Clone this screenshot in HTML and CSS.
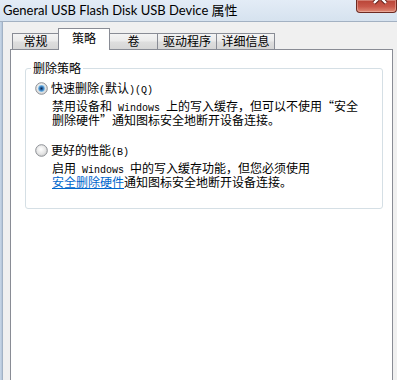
FILE: index.html
```html
<!DOCTYPE html>
<html lang="zh-CN">
<head>
<meta charset="utf-8">
<title>General USB Flash Disk USB Device 属性</title>
<link rel="stylesheet" href="styles.css">
</head>
<body>
<div class="window">
  <div class="titlebar">
    <span class="title">General USB Flash Disk USB Device 属性</span>
    <span class="close">
      <svg width="41" height="13" viewBox="0 0 41 13">
        <path d="M18 -9 L30 3 M30 -9 L18 3" stroke="#5a1a14" stroke-width="4.2" fill="none"/>
        <path d="M18 -9 L30 3 M30 -9 L18 3" stroke="#ffffff" stroke-width="2.4" fill="none"/>
      </svg>
    </span>
  </div>
  <div class="frame">
    <div class="edge"></div>
    <div class="client">
      <div class="tabs">
        <div class="tab t1">常规</div>
        <div class="tab active">策略</div>
        <div class="tab t3">卷</div>
        <div class="tab t4">驱动程序</div>
        <div class="tab t5">详细信息</div>
      </div>
      <div class="panel">
        <fieldset class="group">
          <legend>删除策略</legend>
          <label class="option">
            <span class="radio">
              <svg width="13" height="13" viewBox="0 0 13 13">
                <defs>
                  <radialGradient id="rbg1" cx="45%" cy="40%" r="65%">
                    <stop offset="0" stop-color="#ffffff"/>
                    <stop offset="1" stop-color="#d2d2d2"/>
                  </radialGradient>
                  <radialGradient id="dot1" cx="50%" cy="50%" r="50%">
                    <stop offset="0" stop-color="#0f2748"/>
                    <stop offset="0.45" stop-color="#2a69ad"/>
                    <stop offset="1" stop-color="#86c6ee"/>
                  </radialGradient>
                </defs>
                <circle cx="6.5" cy="6.5" r="5.8" fill="url(#rbg1)" stroke="#8c8f94" stroke-width="1"/>
                <circle cx="6.5" cy="6.5" r="3.4" fill="url(#dot1)"/>
              </svg>
            </span>
            <span class="label">快速删除<span class="a">(</span>默认<span class="a">)(Q)</span></span>
          </label>
          <p class="desc">禁用设备和<span class="a"> Windows </span>上的写入缓存，但可以不使用“安全<br>删除硬件”通知图标安全地断开设备连接。</p>
          <label class="option second">
            <span class="radio">
              <svg width="13" height="13" viewBox="0 0 13 13">
                <defs>
                  <radialGradient id="rbg2" cx="45%" cy="40%" r="65%">
                    <stop offset="0" stop-color="#ffffff"/>
                    <stop offset="0.6" stop-color="#e6e6e6"/>
                    <stop offset="1" stop-color="#c8c8c8"/>
                  </radialGradient>
                </defs>
                <circle cx="6.5" cy="6.5" r="5.8" fill="url(#rbg2)" stroke="#8c8f94" stroke-width="1"/>
              </svg>
            </span>
            <span class="label">更好的性能<span class="a">(B)</span></span>
          </label>
          <p class="desc">启用<span class="a"> Windows </span>中的写入缓存功能，但您必须使用<br><a class="link" href="#">安全删除硬件</a>通知图标安全地断开设备连接。</p>
        </fieldset>
      </div>
    </div>
  </div>
</div>
</body>
</html>
```
FILE: styles.css
```css
* { box-sizing: border-box; }
html, body { margin: 0; padding: 0; }
body {
  width: 397px;
  height: 380px;
  overflow: hidden;
  background: #f0f0f0;
  color: #000;
  font-family: "Noto Sans CJK SC", sans-serif;
  font-size: 12px;
}
.window {
  display: flex;
  flex-direction: column;
  height: 380px;
}
.titlebar {
  flex: none;
  height: 22px;
  display: flex;
  justify-content: space-between;
  align-items: flex-start;
  background: linear-gradient(#e3ecf6, #d6e2ef);
  border-bottom: 1px solid #a3b1c2;
}
.title {
  font-family: "Lato", "Noto Sans CJK SC", sans-serif;
  font-size: 13px;
  line-height: 20px;
  padding-left: 3px;
  white-space: nowrap;
}
.close {
  width: 41px;
  height: 13px;
  display: block;
  background: linear-gradient(#b84336, #c9584a 55%, #de8b77);
  border: 1px solid #6d2a22;
  border-top: 0;
  border-radius: 0 0 4px 4px;
  box-shadow: inset 0 0 0 1px rgba(255, 230, 220, 0.35);
  overflow: hidden;
}
.close svg { display: block; margin: 0 0 0 -1px; }
.frame {
  flex: 1;
  display: flex;
  min-height: 0;
}
.edge {
  width: 3px;
  flex: none;
  background: linear-gradient(90deg, #c9d8e9, #b3c4d8);
  border-right: 1px solid #a2b2c5;
}
.client {
  flex: 1;
  display: flex;
  flex-direction: column;
  padding: 6px 4px 0 7px;
  min-height: 0;
}
.tabs {
  flex: none;
  height: 21px;
  display: flex;
  align-items: flex-end;
  padding-left: 2px;
}
.tab {
  height: 16px;
  border: 1px solid #898c95;
  border-bottom: 0;
  margin-left: -1px;
  padding-top: 1px;
  line-height: 12px;
  text-align: center;
  white-space: nowrap;
  background: linear-gradient(#f4f4f4, #ebebeb 45%, #dedede 55%, #d6d6d6);
}
.t1 { width: 47px; margin-left: 0; }
.t3 { width: 49px; }
.t4 { width: 60px; }
.t5 { width: 59px; }
.tab.active {
  width: 52px;
  height: 22px;
  margin-bottom: -1px;
  padding-top: 3px;
  background: #fff;
  position: relative;
  z-index: 1;
}
.panel {
  flex: 1;
  background: #fff;
  border: 1px solid #898c95;
  border-bottom: 0;
  min-height: 0;
}
.group {
  margin: 12px 9px 0 14px;
  border: 1px solid #d5dfe5;
  border-radius: 3px;
  padding: 8px 0 20px 5px;
  min-width: 0;
}
.group legend {
  padding: 0 2px;
  line-height: 12px;
  font-size: 12px;
}
.option {
  display: flex;
  align-items: center;
  height: 13px;
  line-height: 13px;
  margin-left: 4px;
}
.option.second { margin-top: 18px; }
.radio {
  width: 13px;
  height: 13px;
  flex: none;
  margin-right: 3px;
}
.radio svg { display: block; }
.label { white-space: nowrap; }
.desc {
  margin: 5px 0 0 21px;
  line-height: 12px;
  white-space: nowrap;
}
.a {
  font-family: "Liberation Mono", monospace;
  font-size: 10px;
  line-height: 10px;
  white-space: pre;
}
.link {
  color: #0066cc;
  text-decoration: underline;
}
```
